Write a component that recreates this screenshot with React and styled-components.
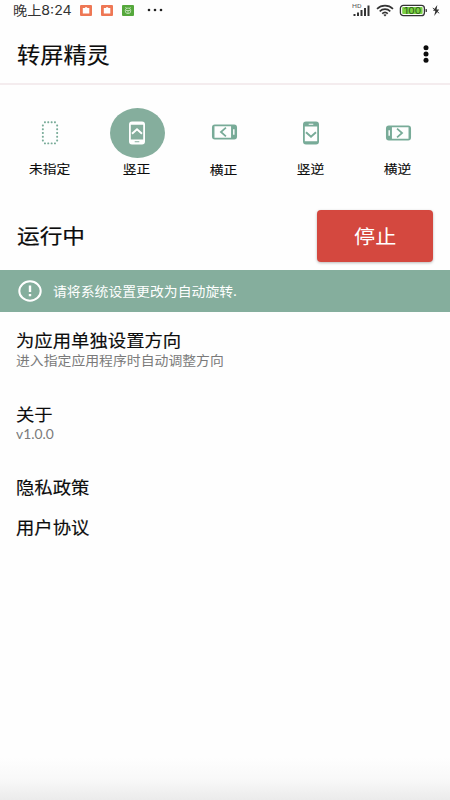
import React, { useState } from 'react';
import styled, { createGlobalStyle } from 'styled-components';

const GREEN = '#85ae9d';

const GlobalStyle = createGlobalStyle`
    * {
        box-sizing: border-box;
    }
    body {
        margin: 0;
        background-color: #fefefe;
        color: #0c0c0c;
        font-family: "Noto Sans CJK SC", "Noto Sans", sans-serif;
    }
    button {
        font-family: inherit;
        border: none;
        background: none;
        padding: 0;
        cursor: pointer;
    }
`;

const Screen = styled.div`
    display: flex;
    flex-direction: column;
    width: 450px;
    height: 800px;
    overflow: hidden;
    background: linear-gradient(#fefefe 758px, #f8f8f8 780px, #ebebeb 800px);
`;

const StatusBar = styled.div`
    display: flex;
    align-items: center;
    justify-content: space-between;
    height: 20px;
    flex: none;
    padding: 0 10px 0 13px;
    color: #333;
`;

const StatusGroup = styled.div`
    display: flex;
    align-items: center;
    height: 20px;
    gap: ${(props) => props.$gap}px;
`;

// wide lettering: glyphs are a little broader than they are tall
const Wide = styled.span`
    display: inline-block;
    white-space: nowrap;
    transform: scaleX(${(props) => props.$scale || 1.1});
    transform-origin: ${(props) => props.$origin || 'left'} center;
`;

const Clock = styled.div`
    width: 58px;
    font-family: Inter, "Noto Sans CJK SC", sans-serif;
    font-size: 13px;
    line-height: 20px;
    white-space: nowrap;
`;

const Header = styled.header`
    display: flex;
    align-items: center;
    justify-content: space-between;
    height: 65px;
    flex: none;
    padding: 4px 16px 0 17px;
    border-bottom: 2px solid #f4ecee;
`;

const Title = styled.h1`
    margin: 0;
    font-size: 21.1px;
    line-height: 30px;
    font-weight: 400;
    -webkit-text-stroke: 0.15px currentColor;
`;

const MenuButton = styled.button`
    display: flex;
    width: 17px;
    height: 20px;
    align-items: center;
    justify-content: center;
`;

const Modes = styled.div`
    display: grid;
    grid-template-columns: repeat(5, 87px);
    width: 448px;
    justify-content: center;
    height: 115px;
    flex: none;
    padding-top: 23px;
`;

const Mode = styled.button`
    display: flex;
    flex-direction: column;
    align-items: center;
    gap: ${(props) => (props.$loose ? 3 : 1)}px;
    margin-top: ${(props) => (props.$loose ? -1 : 0)}px;
    color: #0c0c0c;
    font-size: 12.5px;
    line-height: 20px;
    -webkit-text-stroke: 0.12px currentColor;
`;

const ModeIcon = styled.div`
    display: flex;
    align-items: center;
    justify-content: center;
    width: 55px;
    height: 50px;
    border-radius: 50%;
    color: ${(props) => (props.$active ? '#ffffff' : '#78ab98')};
    background-color: ${(props) => (props.$active ? GREEN : 'transparent')};
`;

const RunRow = styled.div`
    display: flex;
    align-items: center;
    justify-content: space-between;
    height: 70px;
    flex: none;
    padding: 1px 17px 0;
`;

const RunState = styled.div`
    font-size: 20.6px;
    line-height: 30px;
    margin-top: -2px;
    -webkit-text-stroke: 0.2px currentColor;
`;

const StopButton = styled.button`
    width: 116px;
    height: 52px;
    border-radius: 4px;
    background-color: #d4483f;
    box-shadow: 0 1px 3px rgba(0, 0, 0, 0.28);
    color: #ffffff;
    font-size: 19.2px;
    line-height: 30px;
`;

const Notice = styled.div`
    display: flex;
    align-items: center;
    height: 42px;
    flex: none;
    padding-left: 18px;
    gap: 11px;
    background-color: ${GREEN};
    color: #ffffff;
    font-size: 12.6px;
    line-height: 20px;
`;

const List = styled.div`
    display: flex;
    flex-direction: column;
    padding: 16px 17px 0 16px;
`;

const Item = styled.div`
    display: flex;
    flex-direction: column;
    align-items: flex-start;
    margin-bottom: ${(props) => props.$space}px;
`;

const ItemTitle = styled.div`
    font-size: 16.7px;
    line-height: 24px;
    -webkit-text-stroke: 0.15px currentColor;
`;

const ItemNote = styled.div`
    font-family: ${(props) => (props.$latin ? 'Lato, sans-serif' : 'inherit')};
    font-size: 12.6px;
    line-height: ${(props) => (props.$latin ? 17 : 16)}px;
    color: #7a7a7a;
`;

const MODES = [
    { id: 'none', label: '未指定' },
    { id: 'up', label: '竖正' },
    { id: 'left', label: '横正', loose: true },
    { id: 'down', label: '竖逆' },
    { id: 'right', label: '横逆' }
];

const ITEMS = [
    { title: '为应用单独设置方向', note: '进入指定应用程序时自动调整方向', space: 34 },
    { title: '关于', note: 'v1.0.0', latin: true, space: 32 },
    { title: '隐私政策', space: 16 },
    { title: '用户协议', space: 0 }
];

function PhoneIcon({ mode }) {
    if (mode === 'none') {
        return (
            <svg width="18" height="26" viewBox="0 0 18 26" fill="currentColor">
                {[4, 7.3, 10.7, 14].map((x) => (
                    <React.Fragment key={x}>
                        <rect x={x - 1} y="1.3" width="1.9" height="1.9" rx=".6" />
                        <rect x={x - 1} y="22.4" width="1.9" height="1.9" rx=".6" />
                    </React.Fragment>
                ))}
                {[5.5, 9.3, 13, 16.8, 20.5].map((y) => (
                    <React.Fragment key={y}>
                        <rect x=".9" y={y - 1} width="1.9" height="1.9" rx=".6" />
                        <rect x="15.2" y={y - 1} width="1.9" height="1.9" rx=".6" />
                    </React.Fragment>
                ))}
            </svg>
        );
    }
    if (mode === 'up' || mode === 'down') {
        return (
            <svg width="18" height="26" viewBox="0 0 18 26">
                <g transform={mode === 'down' ? 'rotate(180 9 13)' : undefined}>
                    <path
                        fill="currentColor"
                        fillRule="evenodd"
                        d="M4 1.5h10a3 3 0 0 1 3 3v17a3 3 0 0 1-3 3H4a3 3 0 0 1-3-3v-17a3 3 0 0 1 3-3zM2.8 4.8v14.6h12.4V4.8zM6.7 21.2v1h4.6v-1z"
                    />
                    <path d="M4 13.8l5-4.6 5 4.6" fill="none" stroke="currentColor" strokeWidth="1.9" />
                </g>
            </svg>
        );
    }
    return (
        <svg width="27" height="18" viewBox="0 0 28 18">
            <g transform={mode === 'right' ? 'rotate(180 14 9)' : undefined}>
                <path
                    fill="currentColor"
                    fillRule="evenodd"
                    d="M4 1.3h20a3 3 0 0 1 3 3v9.4a3 3 0 0 1-3 3H4a3 3 0 0 1-3-3V4.3a3 3 0 0 1 3-3zM3.6 3.1v11.8h17.2V3.1zM22.9 6.2v5.6h1.5V6.2z"
                />
                <path d="M15.5 4.5L10.3 9l5.2 4.5" fill="none" stroke="currentColor" strokeWidth="1.8" />
            </g>
        </svg>
    );
}

function AppBadge({ color, round }) {
    return (
        <svg width="12" height="11" viewBox="0 0 12 11">
            <rect width="12" height="11" rx="1" fill={color} />
            {round ? (
                <g fill="none" stroke="#b9dfae" strokeWidth="1">
                    <circle cx="6" cy="5.8" r="2.8" />
                    <path d="M3.5 2l1 1.5M8.5 2l-1 1.5M4 5.5h4M5 7h2" />
                </g>
            ) : (
                <path d="M2.8 3h2l.5-.8h1.6l.5.8h1.9v5.6H2.8z" fill="#fff" />
            )}
        </svg>
    );
}

function SignalIcon() {
    return (
        <svg width="19" height="14" viewBox="0 0 19 14" fill="#333">
            <text x="0" y="5.3" fontSize="6.2" fill="#555" fontFamily="Roboto, sans-serif" textLength="9.5" lengthAdjust="spacingAndGlyphs">
                HD
            </text>
            <rect x="1.5" y="11" width="2" height="2" />
            <rect x="5" y="9.5" width="2" height="3.5" />
            <rect x="8.5" y="7" width="2" height="6" />
            <rect x="12" y="5" width="2" height="8" />
            <rect x="15.5" y="2.5" width="2" height="10.5" />
        </svg>
    );
}

function WifiIcon() {
    return (
        <svg width="18" height="13" viewBox="0 0 18 13" fill="none" stroke="#333" strokeWidth="1.6">
            <path d="M1 4.8c4.5-4.3 11.5-4.3 16 0M3.7 7.3c3-2.9 7.6-2.9 10.6 0M6.2 9.6c1.6-1.5 4-1.5 5.6 0" />
            <path d="M7.3 10.8L9 12.4l1.7-1.6c-1-.8-2.4-.8-3.4 0z" fill="#333" stroke="none" />
        </svg>
    );
}

function BatteryIcon() {
    return (
        <svg width="28" height="13" viewBox="-.6 0 28 13">
            <rect x=".8" y="1.3" width="24" height="10.4" rx="3" fill="#fff" stroke="#333" strokeWidth="1.3" />
            <rect x="2.6" y="3" width="20.4" height="7" rx="1" fill="#7bd044" />
            <rect x="26" y="5" width="1.3" height="3" rx=".6" fill="#333" />
            <text
                x="4.5"
                y="9.7"
                fontSize="9"
                fontFamily="Inter, sans-serif"
                fill="#2c5a18"
                textLength="17"
                lengthAdjust="spacingAndGlyphs"
            >
                100
            </text>
        </svg>
    );
}

function App() {
    const [active, setActive] = useState('up');

    return (
        <Screen>
            <GlobalStyle />
            <StatusBar>
                <StatusGroup $gap={9}>
                    <Clock><Wide $scale={1.09}>晚上8:24</Wide></Clock>
                    <AppBadge color="#ee7754" />
                    <AppBadge color="#ee7754" />
                    <AppBadge color="#55a83c" round />
                    <svg width="22" height="4" viewBox="0 0 22 4" fill="#222">
                        <circle cx="6" cy="2" r="1.3" />
                        <circle cx="12" cy="2" r="1.3" />
                        <circle cx="18" cy="2" r="1.3" />
                    </svg>
                </StatusGroup>
                <StatusGroup $gap={5}>
                    <SignalIcon />
                    <WifiIcon />
                    <BatteryIcon />
                    <svg width="8" height="11" viewBox="0 0 8 11">
                        <path d="M5.3 0L1 5.7h2.4L2.2 11 7.2 4.5H4.6z" fill="#333" />
                        <path d="M.8 3l6.4 5.2" stroke="#333" strokeWidth=".9" />
                    </svg>
                </StatusGroup>
            </StatusBar>
            <Header>
                <Title><Wide>转屏精灵</Wide></Title>
                <MenuButton aria-label="菜单">
                    <svg width="6" height="18" viewBox="0 0 6 18" fill="#0c0c0c">
                        <circle cx="3" cy="2.7" r="2.5" />
                        <circle cx="3" cy="9" r="2.5" />
                        <circle cx="3" cy="15.3" r="2.5" />
                    </svg>
                </MenuButton>
            </Header>
            <Modes>
                {MODES.map((mode) => (
                    <Mode key={mode.id} $loose={mode.loose} onClick={() => setActive(mode.id)}>
                        <ModeIcon $active={active === mode.id}>
                            <PhoneIcon mode={mode.id} />
                        </ModeIcon>
                        <Wide $origin="center">{mode.label}</Wide>
                    </Mode>
                ))}
            </Modes>
            <RunRow>
                <RunState><Wide>运行中</Wide></RunState>
                <StopButton><Wide $origin="center">停止</Wide></StopButton>
            </RunRow>
            <Notice>
                <svg width="24" height="22" viewBox="0 0 24 22">
                    <ellipse cx="12" cy="11" rx="10.7" ry="9.7" fill="none" stroke="#fff" strokeWidth="2" />
                    <path d="M10.8 5.5h2.4v6.5h-2.4zM10.8 14h2.4v2.2h-2.4z" fill="#fff" />
                </svg>
                <Wide>请将系统设置更改为自动旋转.</Wide>
            </Notice>
            <List>
                {ITEMS.map((item) => (
                    <Item key={item.title} $space={item.space}>
                        <ItemTitle><Wide>{item.title}</Wide></ItemTitle>
                        {item.note ? <ItemNote $latin={item.latin}><Wide>{item.note}</Wide></ItemNote> : null}
                    </Item>
                ))}
            </List>
        </Screen>
    );
}

export default App;
